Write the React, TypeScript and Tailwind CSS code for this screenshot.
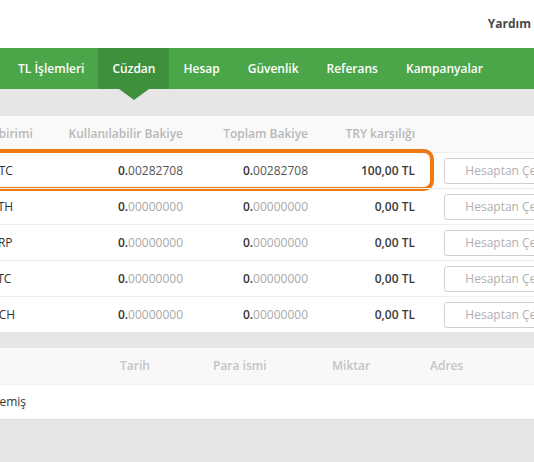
const rows = [
  { code: "BTC", avail: "00282708", total: "00282708", tl: "100,00 TL", active: true },
  { code: "ETH", avail: "00000000", total: "00000000", tl: "0,00 TL" },
  { code: "XRP", avail: "00000000", total: "00000000", tl: "0,00 TL" },
  { code: "LTC", avail: "00000000", total: "00000000", tl: "0,00 TL" },
  { code: "BCH", avail: "00000000", total: "00000000", tl: "0,00 TL" },
];

const nav = ["TL İşlemleri", "Cüzdan", "Hesap", "Güvenlik", "Referans", "Kampanyalar"];

function Amount({ value, active }: { value: string; active?: boolean }) {
  return (
    <span>
      <span className="font-semibold text-[#333]">0.</span>
      <span className={active ? "text-[#555]" : "text-[#a9a9a9]"}>{value}</span>
    </span>
  );
}

export default function App() {
  return (
    <div className="w-[534px] h-[462px] overflow-hidden bg-[#e6e6e6] font-['Open_Sans',sans-serif]">
      {/* Üst bar */}
      <header className="h-[48px] bg-white flex items-center justify-end">
        <span className="text-[12px] font-bold text-[#484848] whitespace-nowrap -mr-[48px]">Yardım Merkezi</span>
      </header>

      {/* Menü */}
      <nav className="h-[41px] bg-[#4ba649] flex pl-[4px]">
        {nav.map((item) => (
          <div
            key={item}
            className={`relative flex items-center px-[14px] text-[12px] font-semibold text-white whitespace-nowrap ${
              item === "Cüzdan" ? "bg-[#3e903c]" : ""
            }`}
          >
            {item}
            {item === "Cüzdan" && (
              <span className="absolute left-1/2 -translate-x-1/2 top-full w-0 h-0 border-l-[15px] border-r-[15px] border-t-[11px] border-l-transparent border-r-transparent border-t-[#3e903c]" />
            )}
          </div>
        ))}
      </nav>

      {/* Cüzdan tablosu */}
      <section className="mt-[27px] -ml-[40px] w-[640px] bg-white text-[12px]">
        <div className="h-[36px] flex items-center bg-[#f9f9f9] font-semibold text-[#b8b8b8]">
          <div className="w-[100px] pl-[9px] whitespace-nowrap">Para birimi</div>
          <div className="w-[123px] text-right whitespace-nowrap">Kullanılabilir Bakiye</div>
          <div className="w-[125px] text-right whitespace-nowrap">Toplam Bakiye</div>
          <div className="w-[107px] text-right whitespace-nowrap">TRY karşılığı</div>
        </div>
        {rows.map((r) => (
          <div key={r.code} className="relative h-[36px] flex items-center border-t border-[#eeeeee]">
            <div className="w-[100px] pl-[31px] text-[#333]">{r.code}</div>
            <div className="w-[123px] text-right">
              <Amount value={r.avail} active={r.active} />
            </div>
            <div className="w-[125px] text-right">
              <Amount value={r.total} active={r.active} />
            </div>
            <div className="w-[107px] text-right font-semibold text-[#3a3a3a]">{r.tl}</div>
            <button className="ml-[29px] h-[26px] w-[120px] rounded-[3px] border border-[#cfcfcf] bg-white text-[12px] text-[#b0b0b0] whitespace-nowrap">
              Hesaptan Çek
            </button>
            {r.active && (
              <div className="absolute -left-[10px] -top-[4px] w-[484px] h-[42px] rounded-[10px] border-[4px] border-[#f07a12] pointer-events-none" />
            )}
          </div>
        ))}
      </section>

      {/* Geçmiş */}
      <section className="mt-[16px] bg-white text-[12px]">
        <div className="h-[36px] flex items-center bg-[#f8f8f8] font-semibold text-[#c4c4c4]">
          <div className="w-[120px]" />
          <div className="w-[93px]">Tarih</div>
          <div className="w-[119px]">Para ismi</div>
          <div className="w-[98px]">Miktar</div>
          <div>Adres</div>
        </div>
        <div className="h-[36px] flex items-center border-t border-[#f0f0f0] border-b border-b-[#dcdcdc]">
          <div className="-ml-[200px] w-[226px] text-right whitespace-nowrap text-[#333]">Henüz bir işlem gerçekleşmemiş</div>
        </div>
      </section>
    </div>
  );
}
